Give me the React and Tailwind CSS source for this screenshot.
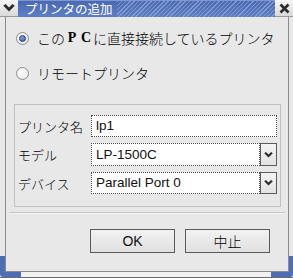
import React from "react";

const JA = "font-['Noto_Sans_CJK_JP',sans-serif]";
const LAT = "font-['Liberation_Sans','Noto_Sans_CJK_JP',sans-serif]";

function Chevron({ className = "", w = 10, h = 7 }) {
  return (
    <svg width={w} height={h} viewBox="0 0 10 7" className={className}>
      <path d="M0 1.5 L2 0 L5 3 L8 0 L10 1.5 L5 6.5 Z" fill="#2b2b2b" />
    </svg>
  );
}

function Radio({ checked }) {
  return (
    <span className="w-[13px] h-[13px] rounded-full border border-[#8c8c8c] bg-[radial-gradient(circle_at_40%_35%,#ffffff,#e4e4e4)] flex items-center justify-center shrink-0">
      {checked && (
        <span className="w-[7px] h-[7px] rounded-full bg-[radial-gradient(circle_at_40%_35%,#8aa6e6,#2b4f9e)] border border-[#2a437e]" />
      )}
    </span>
  );
}

function Entry({ value, combo, h = "h-[22px]" }) {
  return (
    <div className={`flex ${h} w-full`}>
      <div
        className={`flex-1 bg-white border border-dotted border-[#4a4a4a] flex items-center pl-[4px] text-[13.5px] text-[#111] leading-none ${LAT}`}
      >
        {value}
      </div>
      {combo && (
        <div className="w-[17px] border border-[#5c5c5c] bg-[linear-gradient(#f4f4f4,#e2e2e2)] flex items-center justify-center">
          <Chevron w={9} h={6} />
        </div>
      )}
    </div>
  );
}

const ROWS = [
  { label: "プリンタ名", value: "lp1", combo: false, h: "h-[22px]" },
  { label: "モデル", value: "LP-1500C", combo: true, h: "h-[23px]" },
  { label: "デバイス", value: "Parallel Port 0", combo: true, h: "h-[22px]" },
];

export default function App() {
  return (
    <div className={`w-[293px] h-[278px] flex flex-col bg-[#e8e8e8] overflow-hidden font-light ${JA}`}>
      {/* title bar */}
      <div className="h-[17px] flex shrink-0">
        <div className="w-[18px] rounded-tl-[3px] border-b border-[#9a9a9a] bg-[linear-gradient(#f6f6f6,#d9d9d9)] flex items-center justify-center">
          <Chevron w={12} h={8} />
        </div>
        <div className="flex-1 flex bg-[linear-gradient(#4a69b0,#5f7fc4)] border-t border-[#7d97d3]">
          <span className="pl-[7px] pr-[4px] text-white text-[12.5px] font-normal leading-[16px] whitespace-nowrap">
            プリンタの追加
          </span>
          <div className="flex-1 bg-[repeating-linear-gradient(135deg,#8ba3da_0px,#8ba3da_1px,transparent_1px,transparent_3px)] opacity-80" />
        </div>
        <div className="w-[18px] rounded-tr-[3px] border-b border-[#9a9a9a] bg-[linear-gradient(#f6f6f6,#d9d9d9)] flex items-center justify-center">
          <svg width="11" height="11" viewBox="0 0 11 11">
            <path d="M1.5 1.5 L9.5 9.5 M9.5 1.5 L1.5 9.5" stroke="#2b2b2b" strokeWidth="2.6" />
          </svg>
        </div>
      </div>

      {/* body */}
      <div className="h-[255px] flex shrink-0">
        <div className="w-[6px] flex flex-col border-r border-[#8a8a8a]">
          <div className="flex-1" />
          <div className="h-[16px] bg-[#4d6db4]" />
        </div>

        <div className="flex-1 flex flex-col border-b border-[#8a8a8a]">
          <div className="mt-[11px] h-[20px] flex items-center pl-[10px] gap-[8px]">
            <Radio checked />
            <span className="text-[14px] text-black leading-none whitespace-nowrap flex items-center">
              この
              <span className="w-[14px] text-center font-['Liberation_Serif',serif] font-bold">P</span>
              <span className="w-[14px] text-center font-['Liberation_Serif',serif] font-bold">C</span>
              に直接接続しているプリンタ
            </span>
          </div>
          <div className="mt-[15px] h-[20px] flex items-center pl-[10px] gap-[8px]">
            <Radio />
            <span className="text-[14px] text-black leading-none whitespace-nowrap">リモートプリンタ</span>
          </div>

          {/* group */}
          <div className="mt-[21px] ml-[8px] mr-[7px] border border-[#c2c2c2] pt-[10px] pb-[12px] pl-[3px] pr-[3px] flex flex-col gap-[6px]">
            {ROWS.map((r) => (
              <div key={r.label} className="flex items-center">
                <span className="w-[73px] text-[13px] text-black leading-none whitespace-nowrap">{r.label}</span>
                <div className="flex-1">
                  <Entry value={r.value} combo={r.combo} h={r.h} />
                </div>
              </div>
            ))}
          </div>

          <div className="mt-[5px] mx-[3px] h-[2px] border-t border-[#c4c4c4] border-b border-b-[#f4f4f4]" />

          <div className="mt-[15px] flex justify-end gap-[10px] pr-[18px]">
            <button className={`w-[85px] h-[24px] border border-[#5a5a5a] bg-[linear-gradient(#f2f2f2,#e0e0e0)] text-[14px] text-[#111] leading-none ${LAT}`}>
              OK
            </button>
            <button className="w-[85px] h-[24px] border border-[#5a5a5a] bg-[linear-gradient(#f2f2f2,#e0e0e0)] text-[14px] text-black leading-none">
              中止
            </button>
          </div>
        </div>

        <div className="w-[5px] flex flex-col border-l border-[#8a8a8a]">
          <div className="flex-1" />
          <div className="h-[16px] bg-[#4d6db4]" />
        </div>
      </div>

      {/* bottom frame */}
      <div className="h-[6px] flex shrink-0 border-b border-[#6a6a6a]">
        <div className="w-[21px] bg-[#4d6db4] rounded-bl-[3px]" />
        <div className="flex-1 bg-[#f2f2f2]" />
        <div className="w-[22px] bg-[#4d6db4] rounded-br-[3px]" />
      </div>
    </div>
  );
}
